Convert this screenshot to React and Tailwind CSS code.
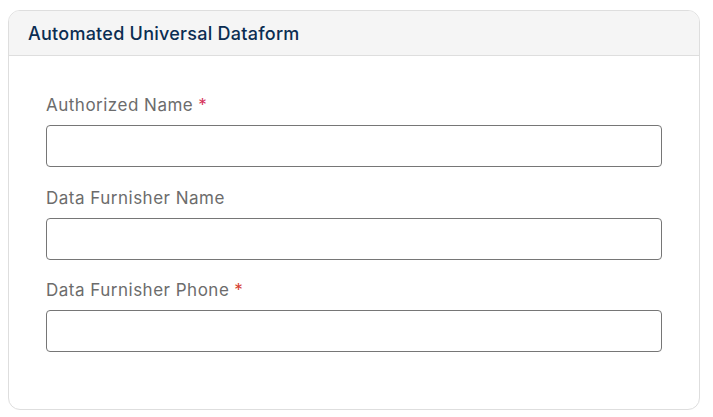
import React from 'react';

function Field({ label, required, starColor }) {
  return (
    <div className="flex flex-col">
      <label className="text-[17px] leading-6 text-[#6c6c6c] tracking-[0.5px]">
        {label}
        {required && <span className={`ml-[5px] ${starColor}`}>*</span>}
      </label>
      <input
        type="text"
        className="mt-2 h-[42px] w-full rounded-[4px] border border-[#767676] bg-white px-3 outline-none"
      />
    </div>
  );
}

export default function App() {
  return (
    <div className="min-h-screen bg-white pt-[10px] pl-[8px] pr-[13px] font-['Inter',sans-serif]">
      <div className="w-[692px] overflow-hidden rounded-[12px] border border-[#dedede] bg-white">
        <div className="h-[45px] flex items-center border-b border-[#dedede] bg-[#f5f5f5] px-[19px]">
          <h2 className="text-[18px] font-medium text-[#0b2d52] tracking-[0.25px]">Automated Universal Dataform</h2>
        </div>
        <div className="flex flex-col gap-[18.5px] pl-[37px] pr-[37px] pt-[37px] pb-[57px]">
          <Field label="Authorized Name" required starColor="text-[#d6335a]" />
          <Field label="Data Furnisher Name" />
          <Field label="Data Furnisher Phone" required starColor="text-[#d6402f]" />
        </div>
      </div>
    </div>
  );
}
